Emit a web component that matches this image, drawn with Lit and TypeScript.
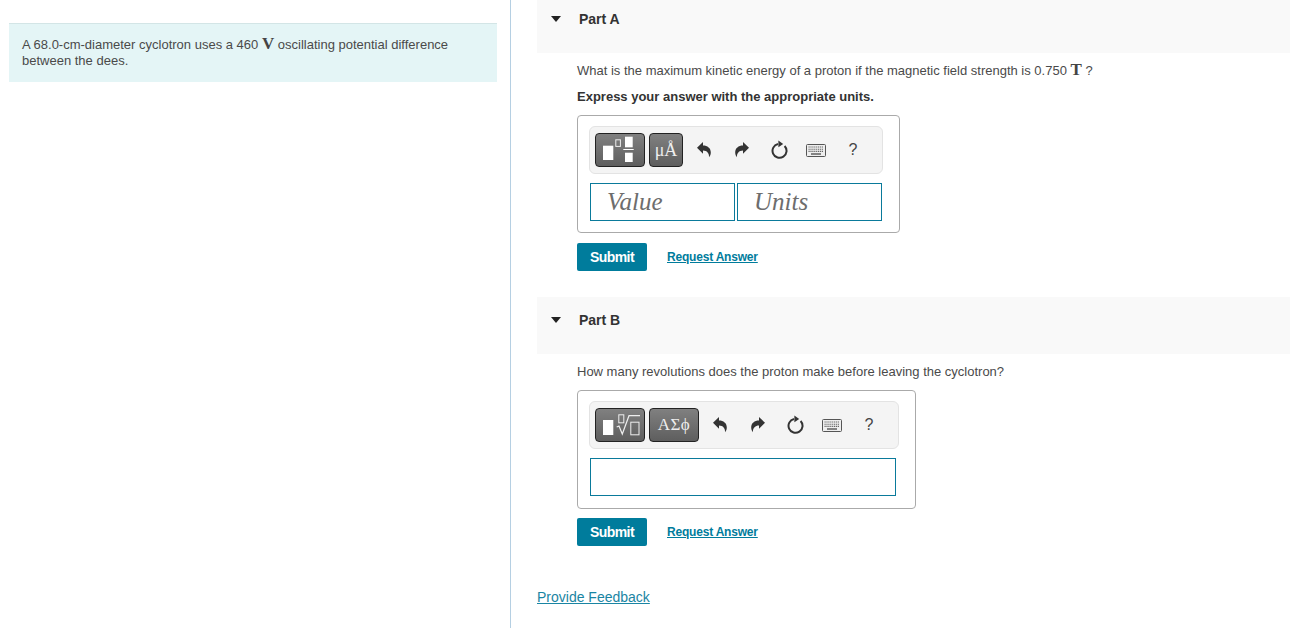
import { LitElement, html, css } from "lit";
import { customElement } from "lit/decorators.js";

const undo = html`<svg width="16" height="18" viewBox="0 0 16 18"><path d="M1 6.8 L7 1 V4.6 C11.5 4.6 14.8 7.3 14.8 11.5 C14.8 13.5 14 15 13 16.2 C13.4 12.5 11 9.6 7 9.6 V12.8 Z" fill="#333"/></svg>`;
const redo = html`<svg width="16" height="18" viewBox="0 0 16 18"><path d="M15 6.8 L9 1 V4.6 C4.5 4.6 1.2 7.3 1.2 11.5 C1.2 13.5 2 15 3 16.2 C2.6 12.5 5 9.6 9 9.6 V12.8 Z" fill="#333"/></svg>`;
const reset = html`<svg width="18" height="20" viewBox="0 0 18 20"><path d="M7 4 A7 7 0 1 0 13.6 6" fill="none" stroke="#333" stroke-width="2"/><path d="M7.4 0.4 L12.2 4 L7.4 7.2 Z" fill="#333"/></svg>`;
const kb = html`<svg width="20" height="13" viewBox="0 0 20 13"><rect x="0.5" y="0.5" width="19" height="12" rx="1" fill="#eee" stroke="#555"/><path d="M2.5 3h15M2.5 5.2h15M2.5 7.4h15" stroke="#666" stroke-width="1.1" stroke-dasharray="1.2 .7"/><path d="M5 10h10" stroke="#555" stroke-width="1.4"/></svg>`;

const templates = html`<svg width="44" height="30" viewBox="0 0 44 30">
  <rect x="5" y="10.7" width="10.3" height="14.3" fill="#fff"/>
  <rect x="17.8" y="4.8" width="4.6" height="6.6" fill="none" stroke="#eee"/>
  <rect x="27" y="1.7" width="7.7" height="10.6" fill="#fff"/>
  <rect x="25.3" y="14" width="10.4" height="1" fill="#fff"/>
  <rect x="27" y="17.7" width="7.7" height="9.3" fill="#fff"/>
</svg>`;
const radical = html`<svg width="44" height="30" viewBox="0 0 44 30">
  <rect x="5" y="10" width="10.3" height="15" fill="#fff"/>
  <rect x="20.8" y="4.8" width="5" height="8" fill="none" stroke="#eee"/>
  <path d="M18.7 17 L21 16 L24.3 24 L31 5.7 H42" fill="none" stroke="#eee" stroke-width="1.2"/>
  <rect x="32.8" y="12.2" width="8.2" height="12.6" fill="none" stroke="#eee"/>
</svg>`;

@customElement("app-root")
export class AppRoot extends LitElement {
  static styles = css`
    :host { display: block; height: 628px; overflow: hidden; font-family: "Liberation Sans", Arial, sans-serif; color: #333; background: #fff; }
    .page { display: flex; height: 628px; }
    .left { width: 510px; border-right: 1px solid #b5cfe2; padding-top: 23px; flex: none; }
    .intro { width: 488px; height: 59px; box-sizing: border-box; margin-left: 9px; background: #e4f5f6; border-top: 1px solid #d3e5e6; padding: 12px 13px 0; font-size: 13px; line-height: 16px; color: #4a4a4a; }
    .tex { font-family: "Liberation Serif", serif; font-size: 17px; line-height: 16px; font-weight: 700; color: #444; }
    .right { flex: 1; padding-left: 26px; min-width: 0; }
    .head { display: flex; align-items: flex-start; background: #f9f9f9; font-size: 14px; line-height: 15px; font-weight: 700; color: #333; box-sizing: border-box; }
    .head.a { height: 53px; padding-top: 12px; }
    .head.b { height: 57px; padding-top: 16px; margin-top: 26px; }
    .tri { width: 0; height: 0; border-left: 5.5px solid transparent; border-right: 5.5px solid transparent; border-top: 6px solid #222; margin: 4px 18px 0 14px; }
    .body { padding-left: 40px; }
    .q { font-size: 13px; line-height: 16px; color: #4a4a4a; margin-top: 9px; height: 16px; white-space: nowrap; }
    .q.bq { margin-top: 10px; }
    .hint { font-size: 13px; font-weight: 700; line-height: 16px; margin-top: 11px; color: #333; }
    .box { border: 1px solid #aaa; border-radius: 4px; box-sizing: border-box; padding: 10px 16px 0 11px; }
    .box.b1 { width: 323px; height: 118px; margin-top: 10px; }
    .box.b2 { width: 339px; height: 119px; margin-top: 10px; margin-bottom: -1px; }
    .tools { display: flex; align-items: center; height: 48px; box-sizing: border-box; background: #f4f4f4; border: 1px solid #e3e3e3; border-radius: 6px; padding-left: 5px; }
    .btn { display: flex; align-items: center; justify-content: center; height: 34px; box-sizing: border-box; border: 1px solid #222; border-radius: 4px; background: linear-gradient(#808080, #5e5e5e); color: #eee; font-family: "Liberation Serif", serif; margin-right: 4px; }
    .btn.w50 { width: 50px; }
    .btn.w34 { width: 34px; font-size: 18px; margin-right: 2px; }
    .btn.w50t { width: 50px; font-size: 17px; letter-spacing: 0.5px; margin-right: 2px; }
    .ic { display: flex; align-items: center; justify-content: center; width: 38px; height: 34px; }
    .ic.kb { width: 34px; }
    .ic.q2 { width: 40px; font-size: 16px; color: #444; }
    .inputs { display: flex; gap: 2px; margin-top: 9px; margin-left: 1px; }
    .field { height: 38px; width: 145px; box-sizing: border-box; border: 1px solid #0a7a9b; background: #fff; font-family: "Liberation Serif", serif; font-style: italic; font-size: 25px; line-height: 36px; color: #6d6d6d; padding-left: 16px; }
    .field.wide { width: 306px; }
    .actions { display: flex; align-items: center; margin-top: 10px; height: 28px; }
    .submit { width: 70px; height: 28px; display: flex; align-items: center; justify-content: center; background: #007c9c; border-radius: 2px; color: #fff; font-size: 14px; font-weight: 700; letter-spacing: -0.55px; }
    .link { color: #007c9c; text-decoration: underline; font-size: 12px; font-weight: 700; letter-spacing: -0.2px; margin-left: 20px; }
    .feedback { display: block; color: #1a85a3; text-decoration: underline; font-size: 14px; line-height: 16px; margin-top: 43px; }
  `;

  private actions() {
    return html`<div class="actions"><div class="submit">Submit</div><a class="link">Request Answer</a></div>`;
  }

  private iconset() {
    return html`<div class="ic">${undo}</div><div class="ic">${redo}</div><div class="ic">${reset}</div><div class="ic kb">${kb}</div><div class="ic q2">?</div>`;
  }

  render() {
    return html`<div class="page">
      <div class="left"><div class="intro">A 68.0-cm-diameter cyclotron uses a 460 <span class="tex">V</span> oscillating potential difference between the dees.</div></div>
      <div class="right">
        <div class="head a"><span class="tri"></span>Part A</div>
        <div class="body">
          <div class="q">What is the maximum kinetic energy of a proton if the magnetic field strength is 0.750 <span class="tex">T</span> ?</div>
          <div class="hint">Express your answer with the appropriate units.</div>
          <div class="box b1">
            <div class="tools"><div class="btn w50">${templates}</div><div class="btn w34">μÅ</div>${this.iconset()}</div>
            <div class="inputs"><div class="field">Value</div><div class="field">Units</div></div>
          </div>
          ${this.actions()}
        </div>
        <div class="head b"><span class="tri"></span>Part B</div>
        <div class="body">
          <div class="q bq">How many revolutions does the proton make before leaving the cyclotron?</div>
          <div class="box b2">
            <div class="tools"><div class="btn w50">${radical}</div><div class="btn w50t">ΑΣϕ</div>${this.iconset()}</div>
            <div class="inputs"><div class="field wide"></div></div>
          </div>
          ${this.actions()}
        </div>
        <a class="feedback">Provide Feedback</a>
      </div>
    </div>`;
  }
}
